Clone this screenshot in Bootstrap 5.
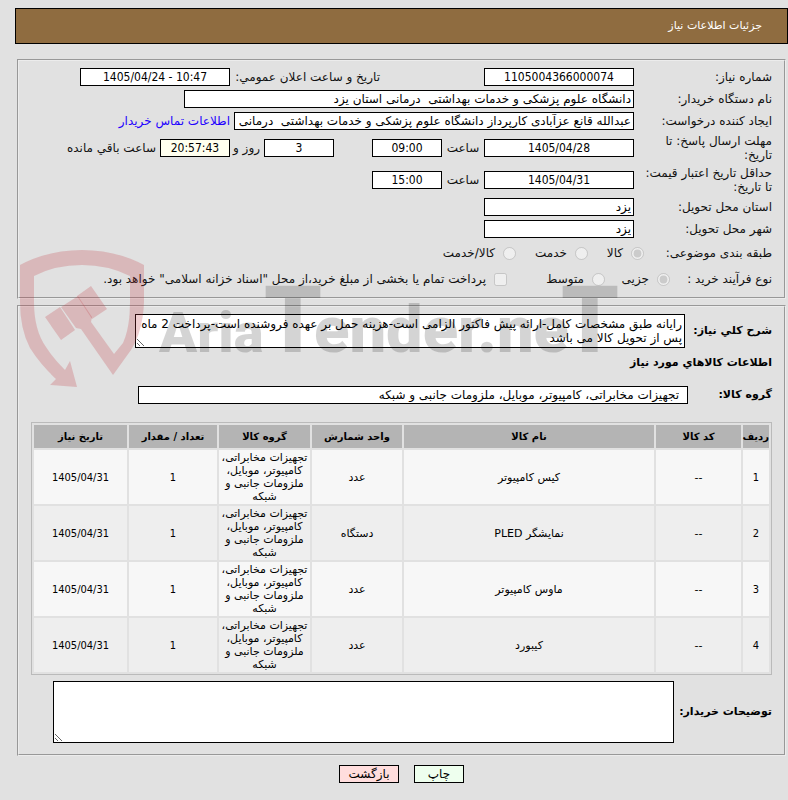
<!DOCTYPE html>
<html lang="fa" dir="rtl">
<head>
<meta charset="utf-8">
<meta name="viewport" content="width=device-width, initial-scale=1">
<title>جزئیات اطلاعات نیاز</title>
<link href="https://cdn.jsdelivr.net/npm/bootstrap@5.3.0/dist/css/bootstrap.min.css" rel="stylesheet">
<style>
body{background:#e1e1e1;color:#111;font:12px/14px "DejaVu Sans",Tahoma,sans-serif;padding:8px 0 16px 15px}
.title-bar{background:#8f6c40;border:1px solid #000;height:36px;color:#fff;padding-right:25px;margin-bottom:15px;font-size:11px}
.panel{border:2px groove #ececec;padding:5px 12px;margin:0 2px 6px 2px;min-width:0}
.panel.items{padding:7px 12px}
.line{min-height:22px}
.line.tall{min-height:32px}
.line.opts{min-height:26px}
.cap{width:138px;flex:none}
.cap span,.cap label{display:inline-block;max-width:132px}
.cap.mid{width:128px}
.cap.slim{width:102px}
.head{font-size:11px;line-height:14px;font-weight:700;color:#000;white-space:nowrap;flex:none}
.head.desc-cap{width:87px}
.head.grp-cap{width:84px}
.head.notes-cap{width:98px}
.box{border:1px solid #000;border-radius:0;background:#fff;color:#000;height:18px;padding:0 2px;font:inherit;min-width:0}
.num{text-align:center;font-family:"DejaVu Sans Condensed","DejaVu Sans",sans-serif}
.w50{width:50px}.w60{width:60px}.w70{width:70px}.w150{width:150px}.w400{width:400px}.w450{width:450px}.w550{width:550px}
.hour{width:42px;text-align:center}
.day{width:34px;padding-right:4px;white-space:nowrap}
.published{width:150px;margin-right:104px;white-space:nowrap}
.days{margin-right:38px}
.timer{background:#ffffef}
.contact{color:#20f;text-decoration:none;white-space:nowrap}
.opt{gap:8px;white-space:nowrap}
.opt input{width:13px;height:13px;margin:0}
.o56{width:56px}.o72{width:72px}.o65{width:65px}.o98{width:98px}
textarea.box{padding:2px}
.desc{height:34px}
.notes{height:62px;flex:1 1 0;margin-left:22px}
.goods{border:1px solid #bababa;border-collapse:separate;border-spacing:2px;width:100%;margin:18px 0 6px;table-layout:fixed;text-align:center;color:#000}
.goods th{background:#b4b4b4;height:23px;padding:0;font-size:10px;line-height:13px;text-align:center;white-space:nowrap}
.goods td{background:#f7f7f7;height:54px;padding:1px 2px;font-size:11px;line-height:13px}
.goods tbody tr:nth-child(even) td{background:#eee}
.c-row{width:26px}.c-code{width:85px}.c-unit{width:90px}.c-group{width:91px}.c-qty{width:88px}.c-date{width:93px}
.actions{gap:15px;padding-top:3px}
.print{background:#efe}
.back{background:#fdd}
.watermark{left:15px;top:240px;width:620px;height:150px;pointer-events:none}
.watermark text{font-family:Roboto,sans-serif;font-weight:900;direction:ltr}
</style>
<script src="https://cdn.jsdelivr.net/npm/bootstrap@5.3.0/dist/js/bootstrap.bundle.min.js"></script>
</head>
<body class="position-relative">
<header class="title-bar d-flex align-items-center">جزئیات اطلاعات نیاز</header>
<main>
<section class="panel">
  <div class="line d-flex align-items-center">
    <div class="cap"><label for="no">شماره نیاز:</label></div>
    <input id="no" class="box num w150" dir="ltr" value="1105004366000074" readonly>
    <label class="published" for="pub">تاریخ و ساعت اعلان عمومي:</label>
    <input id="pub" class="box num w150" dir="ltr" value="1405/04/24 - 10:47" readonly>
  </div>
  <div class="line d-flex align-items-center">
    <div class="cap"><label for="org">نام دستگاه خریدار:</label></div>
    <input id="org" class="box w450" value="دانشگاه علوم پزشکی و خدمات بهداشتی  درمانی استان یزد" readonly>
  </div>
  <div class="line d-flex align-items-center">
    <div class="cap"><label for="req">ایجاد کننده درخواست:</label></div>
    <input id="req" class="box w400" value="عبدالله قانع عزآبادی کارپرداز دانشگاه علوم پزشکی و خدمات بهداشتی  درمانی استان یزد" readonly>
    <a class="contact pe-1" href="#">اطلاعات تماس خریدار</a>
  </div>
  <div class="line tall d-flex align-items-center">
    <div class="cap"><label for="d1">مهلت ارسال پاسخ: تا تاریخ:</label></div>
    <input id="d1" class="box num w150" dir="ltr" value="1405/04/28" readonly>
    <label class="hour" for="h1">ساعت</label>
    <input id="h1" class="box num w70" value="09:00" readonly>
    <input id="days" class="box num w70 days" value="3" readonly>
    <label class="day" for="days">روز و</label>
    <input id="left" class="box num w70 timer" value="20:57:43" readonly>
    <label class="pe-1" for="left">ساعت باقي مانده</label>
  </div>
  <div class="line tall d-flex align-items-center">
    <div class="cap"><label for="d2">حداقل تاریخ اعتبار قیمت: تا تاریخ:</label></div>
    <input id="d2" class="box num w150" dir="ltr" value="1405/04/31" readonly>
    <label class="hour" for="h2">ساعت</label>
    <input id="h2" class="box num w70" value="15:00" readonly>
  </div>
  <div class="line d-flex align-items-center">
    <div class="cap"><label for="prov">استان محل تحویل:</label></div>
    <input id="prov" class="box w150" value="یزد" readonly>
  </div>
  <div class="line d-flex align-items-center">
    <div class="cap"><label for="city">شهر محل تحویل:</label></div>
    <input id="city" class="box w150" value="یزد" readonly>
  </div>
  <div class="line opts d-flex align-items-center">
    <div class="cap mid"><span>طبقه بندی موضوعی:</span></div>
    <label class="opt o56 d-flex align-items-center"><input type="radio" name="kind" checked disabled>کالا</label>
    <label class="opt o72 d-flex align-items-center"><input type="radio" name="kind" disabled>خدمت</label>
    <label class="opt d-flex align-items-center"><input type="radio" name="kind" disabled>کالا/خدمت</label>
  </div>
  <div class="line opts d-flex align-items-center">
    <div class="cap slim"><span>نوع فرآیند خرید :</span></div>
    <label class="opt o65 d-flex align-items-center"><input type="radio" name="proc" checked disabled>جزیی</label>
    <label class="opt o98 d-flex align-items-center"><input type="radio" name="proc" disabled>متوسط</label>
    <label class="opt d-flex align-items-center"><input type="checkbox" disabled>پرداخت تمام یا بخشی از مبلغ خرید،از محل "اسناد خزانه اسلامی" خواهد بود.</label>
  </div>
</section>
<section class="panel items">
  <div class="d-flex align-items-center">
    <label class="head desc-cap" for="desc">شرح كلي نياز:</label>
    <textarea id="desc" class="box desc w550" readonly>رایانه طبق مشخصات کامل-ارائه پیش فاکتور الزامی است-هزینه حمل بر عهده فروشنده است-پرداخت 2 ماه پس از تحویل کالا می باشد</textarea>
  </div>
  <h2 class="head m-0 py-2">اطلاعات كالاهاي مورد نياز</h2>
  <div class="d-flex align-items-center pt-2">
    <label class="head grp-cap" for="grp">گروه کالا:</label>
    <input id="grp" class="box w550 px-2" value="تجهیزات مخابراتی، کامپیوتر، موبایل، ملزومات جانبی و شبکه" readonly>
  </div>
  <table class="goods">
    <colgroup><col class="c-row"><col class="c-code"><col><col class="c-unit"><col class="c-group"><col class="c-qty"><col class="c-date"></colgroup>
    <thead><tr><th>ردیف</th><th>کد کالا</th><th>نام کالا</th><th>واحد شمارش</th><th>گروه کالا</th><th>تعداد / مقدار</th><th>تاریخ نیاز</th></tr></thead>
    <tbody>
      <tr><td class="num">1</td><td>--</td><td>کیس کامپیوتر</td><td>عدد</td><td>تجهیزات مخابراتی، کامپیوتر، موبایل، ملزومات جانبی و شبکه</td><td class="num">1</td><td class="num" dir="ltr">1405/04/31</td></tr>
      <tr><td class="num">2</td><td>--</td><td>نمایشگر PLED</td><td>دستگاه</td><td>تجهیزات مخابراتی، کامپیوتر، موبایل، ملزومات جانبی و شبکه</td><td class="num">1</td><td class="num" dir="ltr">1405/04/31</td></tr>
      <tr><td class="num">3</td><td>--</td><td>ماوس کامپیوتر</td><td>عدد</td><td>تجهیزات مخابراتی، کامپیوتر، موبایل، ملزومات جانبی و شبکه</td><td class="num">1</td><td class="num" dir="ltr">1405/04/31</td></tr>
      <tr><td class="num">4</td><td>--</td><td>کیبورد</td><td>عدد</td><td>تجهیزات مخابراتی، کامپیوتر، موبایل، ملزومات جانبی و شبکه</td><td class="num">1</td><td class="num" dir="ltr">1405/04/31</td></tr>
    </tbody>
  </table>
  <div class="d-flex align-items-center mb-1">
    <label class="head notes-cap" for="notes">توضیحات خریدار:</label>
    <textarea id="notes" class="box notes" readonly></textarea>
  </div>
</section>
<div class="actions d-flex justify-content-center">
  <button type="button" class="box print w50">چاپ</button>
  <button type="button" class="box back w60">بازگشت</button>
</div>
</main>
<svg class="watermark position-absolute" viewBox="15 240 620 150" aria-hidden="true">
  <g fill="#c0373f" fill-opacity=".24">
    <path d="M20 265Q48 250 82 250Q116 250 144 265V302Q143 331 131 350L113 375L81 329L76 328L61 307L78 296L92 317L91 322L114 354L123 343Q130 328 130 302V276Q108 265 82 265Q55 265 34 276V302Q34 330 46 347Q53 358 65 370L70 361L77 387L50 385L56 379Q40 364 30 348Q20 329 20 302Z"/>
    <path d="M45 317L60 307L75 330L61 340ZM77 296L91 286L107 309L92 319Z"/>
  </g>
  <g fill="#000" fill-opacity=".17">
    <text x="159" y="352" font-size="56">Aria</text>
    <text x="264" y="352" font-size="92">T</text>
    <text x="314" y="352" font-size="65">ender.ne</text>
    <text x="561" y="352" font-size="92">T</text>
  </g>
</svg>
</body>
</html>
